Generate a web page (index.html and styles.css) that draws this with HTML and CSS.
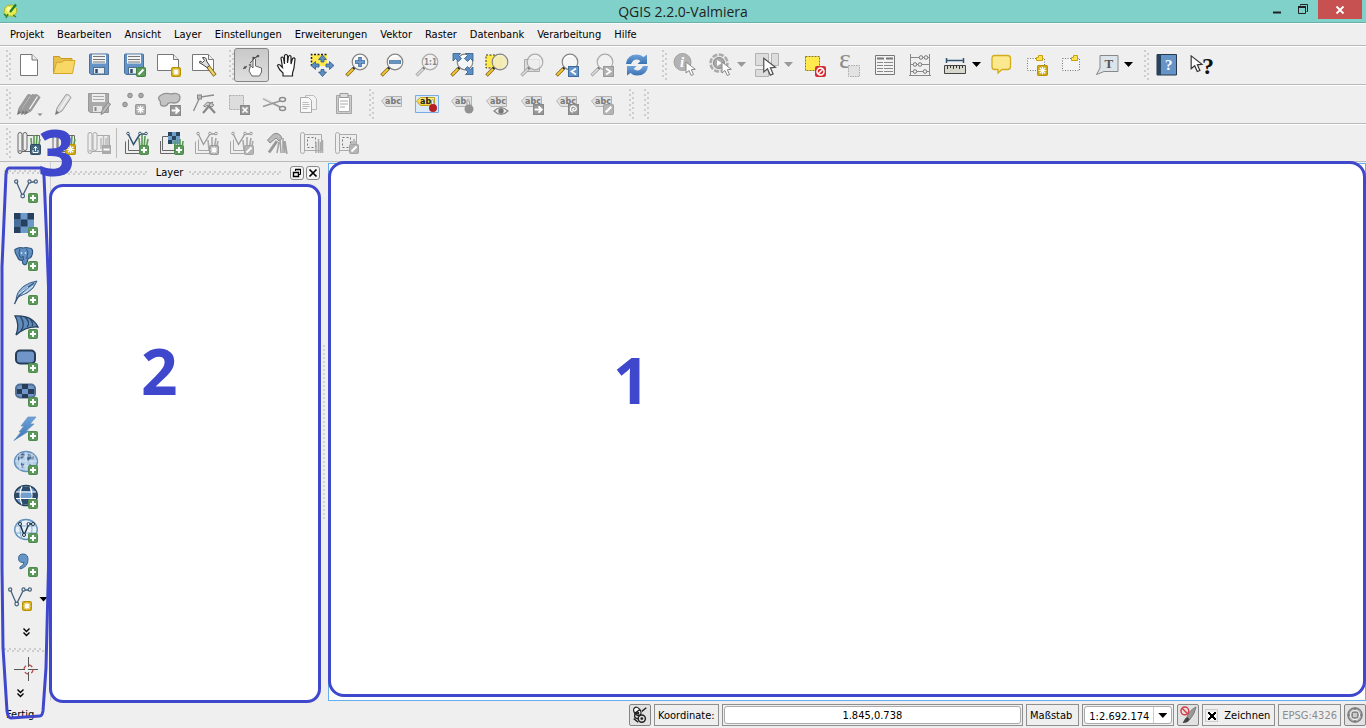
FILE: index.html
```html
<!DOCTYPE html>
<html lang="de">
<head>
<meta charset="utf-8">
<title>QGIS 2.2.0-Valmiera</title>
<link rel="stylesheet" href="styles.css">
</head>
<body>
<svg class="defs" aria-hidden="true">
<defs>
<linearGradient id="yel" x1="0" y1="0" x2="0" y2="1"><stop offset="0" stop-color="#fff27a"/><stop offset="1" stop-color="#f0d040"/></linearGradient>
<linearGradient id="blu" x1="0" y1="0" x2="0" y2="1"><stop offset="0" stop-color="#6fa3dc"/><stop offset="1" stop-color="#3a72b0"/></linearGradient>
<symbol id="b-plus" viewBox="0 0 10 10"><rect x=".5" y=".5" width="9" height="9" rx="1" fill="#5b9a5b" stroke="#4d8a4c"/><path d="M5 2v6M2 5h6" stroke="#fff" stroke-width="2"/></symbol>
<symbol id="b-star" viewBox="0 0 10 10"><rect x=".5" y=".5" width="9" height="9" rx="1" fill="#d0ab14" stroke="#b89300"/><path d="M5 1.500v7M1.500 5h7M2.500 2.500l5 5M7.500 2.500l-5 5" stroke="#fff" stroke-width="1.100"/></symbol>
<symbol id="b-gstar" viewBox="0 0 10 10"><rect x=".5" y=".5" width="9" height="9" rx="1" fill="#adadad" stroke="#9a9a9a"/><path d="M5 1.500v7M1.500 5h7M2.500 2.500l5 5M7.500 2.500l-5 5" stroke="#fff" stroke-width="1.100"/></symbol>
<symbol id="b-pen" viewBox="0 0 10 10"><rect x=".5" y=".5" width="9" height="9" rx="1" fill="#5b9a5b" stroke="#40823f"/><path d="M2.500 7.500L7.500 2.500" stroke="#fff" stroke-width="2"/></symbol>
<symbol id="b-gpen" viewBox="0 0 10 10"><rect x=".5" y=".5" width="9" height="9" rx="1" fill="#b5b5b5" stroke="#a5a5a5"/><path d="M2.500 7.500L7.500 2.500" stroke="#fff" stroke-width="2"/></symbol>
<symbol id="b-garrow" viewBox="0 0 10 10"><rect x=".5" y=".5" width="9" height="9" fill="#999" stroke="#888"/><path d="M1.500 5h6M5 2.200L8 5 5 7.800" fill="none" stroke="#fff" stroke-width="1.700"/></symbol>
<symbol id="cursor" viewBox="0 0 12 16"><path d="M1 1v11l3-2.500 2.200 5 2.300-1-2.200-4.800 4-.4z" fill="#fff" stroke="currentColor"/></symbol>
<symbol id="lens" viewBox="0 0 24 24"><path d="M10 14L8 16" stroke="#222" stroke-width="3"/><path d="M8 16L1.500 22.500" stroke="#7a6415" stroke-width="3.400"/><path d="M8 16L2 22" stroke="#f5c534" stroke-width="2"/><circle cx="15" cy="9" r="7.800" fill="#f7f7f7" fill-opacity=".75" stroke="#858585" stroke-width="1.200"/><path d="M9 7.500a6.500 6.500 0 0 1 9-4" fill="none" stroke="#fff" stroke-width="1.500"/></symbol>
<symbol id="glens" viewBox="0 0 24 24"><path d="M10 14L8 16" stroke="#777" stroke-width="3"/><path d="M8 16L1.500 22.500" stroke="#aaa" stroke-width="3.200"/><path d="M8 16L2 22" stroke="#ddd" stroke-width="1.500"/><circle cx="15" cy="9" r="7.800" fill="#f2f2f2" fill-opacity=".75" stroke="#aaa" stroke-width="1.200"/></symbol>
<symbol id="tag" viewBox="0 0 24 24"><path d="M1.500 9L6 4.500H21.500V14.500H6z" fill="#e2e2e2" stroke="#b3b3b3"/><text x="5" y="12" class="tagtext">abc</text></symbol>
<symbol id="vec" viewBox="0 0 24 24"><path d="M2.500 3L8.500 17 15.500 3H22" fill="none" stroke="#46617a" stroke-width="1.300"/><g fill="#eef3f7" stroke="#46617a" stroke-width="1.200"><circle cx="2.200" cy="2.500" r="1.600"/><circle cx="15.500" cy="2.500" r="1.600"/><circle cx="21.800" cy="2.500" r="1.600"/><circle cx="8.700" cy="17" r="1.800"/></g></symbol>
<symbol id="gmap" viewBox="0 0 24 24"><path d="M.5 10.500V22.500H16M3.500 8.500V19.500H21" fill="none" stroke="#a6a6a6"/><path d="M3 2.500l5.500 11L15 3h6" fill="none" stroke="#999" stroke-width="1.300"/><g fill="#eee" stroke="#999"><circle cx="3" cy="2.500" r="1.300"/><circle cx="15" cy="2.500" r="1.300"/><circle cx="21" cy="2.500" r="1.300"/></g><path d="M14 19L13 9M17 19V6M19 19l2-12M21 19l2-9" stroke="#a9a9a9" stroke-width="1.600"/></symbol>
<symbol id="grass" viewBox="0 0 24 24"><path d="M15 18L14 7M17 18V4M19 18l1-13M21 18l2-10" stroke="#5b9a55" stroke-width="1.600"/></symbol>
<symbol id="loc" viewBox="0 0 24 24"><path d="M10 4.500H22.500V20.500H4" fill="#eee" stroke="currentColor"/><path d="M1 3.500q0-2 2-2t2 2v17q0 2-2 2t-2-2zM6 3.500q0-2 2-2t2 2v14q0 2-2 2t-2-2z" fill="#eee" stroke="currentColor"/><path d="M1.500 20.500q1.500-2 3 0" stroke="currentColor" fill="none"/></symbol>
<symbol id="pencil" viewBox="0 0 24 24"><path d="M3.500 22.500L5 16 14 2.500q3-.500 5 3L10 19z" fill="currentColor" stroke="#999"/><path d="M8.500 17l8-12.500" stroke="#f5f5f5" stroke-width="1.300"/><path d="M3.500 22.500l1-4 2.500 2z" fill="#777"/></symbol>
</defs>
</svg>

<header class="titlebar">
<svg class="applogo" viewBox="0 0 16 16"><path d="M5 2.500q-3.500 3-3 7l3 3 6 1 3.500-4V5L11 2z" fill="#e4ec52" stroke="#a6b83a"/><circle cx="7" cy="6.500" r="2.500" fill="#fff9ad"/><path d="M8 9l6-7.500" stroke="#207c24" stroke-width="2.200"/><path d="M2 11l2 2M6 11l-2 4M11 12l3 2" stroke="#2d8530" stroke-width="1.500"/></svg>
<h1 class="title">QGIS 2.2.0-Valmiera</h1>
<div class="winbuttons">
<button class="win" aria-label="Minimieren"><svg width="12" height="12" viewBox="0 0 12 12"><path d="M2 9.500h8" stroke="#222" stroke-width="2"/></svg></button>
<button class="win" aria-label="Wiederherstellen"><svg width="12" height="12" viewBox="0 0 12 12"><path d="M3.500 2.500v-1h7v7h-1" fill="none" stroke="#222"/><path d="M1.500 3.500h7v7h-7z" fill="none" stroke="#222"/><path d="M1 4h8" stroke="#222" stroke-width="2"/></svg></button>
<button class="win close" aria-label="Schließen"><svg width="10" height="10" viewBox="0 0 10 10"><path d="M1.500 1.500l7 7M8.500 1.500l-7 7" stroke="#fff" stroke-width="1.800"/></svg></button>
</div>
</header>

<nav class="menubar">
<button>Projekt</button><button>Bearbeiten</button><button>Ansicht</button><button>Layer</button><button>Einstellungen</button><button>Erweiterungen</button><button>Vektor</button><button>Raster</button><button>Datenbank</button><button>Verarbeitung</button><button>Hilfe</button>
</nav>

<div class="toolbar">
<div class="group"><i class="grip"></i>
<button class="tool" aria-label="Neu"><svg viewBox="0 0 24 24"><path d="M3.500 1.500H15L20.500 7V22.500H3.500z" fill="#fff" stroke="#777"/><path d="M15 1.500V7h5.500" fill="#eee" stroke="#777"/></svg></button>
<button class="tool" aria-label="Öffnen"><svg viewBox="0 0 24 24"><path d="M1.500 20.500V3.500h6l1.500 2h11v4" fill="#e6c04a" stroke="#c99a20"/><path d="M1.500 20.500L4.500 9.500l6-.500 1-1.500h11.500L20.500 20.500z" fill="#f9d765" stroke="#d4a72b"/></svg></button>
<button class="tool" aria-label="Speichern"><svg viewBox="0 0 24 24"><path d="M2.500 2q0-1 1-1H20.500q1 0 1 1V21.500H4L2.500 20z" fill="#6493c8" stroke="#4b709a"/><rect x="5" y="1.500" width="14" height="9" fill="#f3f3f3"/><path d="M6 3.500h12M6 6.500h12M6 9h12" stroke="#777"/><rect x="6.500" y="14.500" width="11" height="6.500" fill="#e8edf2" stroke="#53718f"/><path d="M9.500 16v4" stroke="#2f4b69" stroke-width="2.500"/></svg></button>
<button class="tool" aria-label="Speichern als"><svg viewBox="0 0 24 24"><path d="M2.500 2q0-1 1-1H20.500q1 0 1 1V21.500H4L2.500 20z" fill="#6493c8" stroke="#4b709a"/><rect x="5" y="1.500" width="14" height="9" fill="#f3f3f3"/><path d="M6 3.500h12M6 6.500h12M6 9h12" stroke="#777"/><rect x="6.500" y="14.500" width="8" height="6.500" fill="#e8edf2" stroke="#53718f"/><path d="M9.500 16v4" stroke="#2f4b69" stroke-width="2.500"/><use href="#b-pen" x="14" y="14" width="10" height="10"/></svg></button>
<button class="tool" aria-label="Neue Druckzusammenstellung"><svg viewBox="0 0 24 24"><path d="M.500 1.500H16.500L21.500 6.500V17.500H.500z" fill="#fff" stroke="#777"/><path d="M16.500 1.500V6.500h5" fill="#eee" stroke="#777"/><use href="#b-star" x="14" y="14" width="10" height="10"/></svg></button>
<button class="tool" aria-label="Druckzusammenstellungen verwalten"><svg viewBox="0 0 24 24"><path d="M.500 1.500H16.500L21.500 6.500V17.500H.500z" fill="#fff" stroke="#777"/><path d="M16.500 1.500V6.500h5" fill="#eee" stroke="#777"/><path d="M16 13.500l7 9" stroke="#7d6720" stroke-width="4"/><path d="M16.500 14l6 8" stroke="#f0d565" stroke-width="2.200"/><path d="M9 10.500l6 4 2.500-2-3-4.500q.500-4-4-3.500l2 3-2 2-2.500-1.500q-1.500 2.500 1 2.500z" fill="#ddd" stroke="#444"/></svg></button>
</div>
<div class="group g2"><i class="grip"></i>
<button class="tool pressed" aria-label="Touch"><svg viewBox="0 0 24 24"><path d="M12 23l-3-5 1-4q2-1.500 3 1V6q1.500-2 2.500 0v7l6 2v4l-2 4z" fill="#fff" stroke="#666"/><path d="M3 16L7 13M10 10L17 3M13 5l4-1" stroke="#555"/><circle cx="10" cy="12" r="1.300" fill="#777"/><circle cx="13.500" cy="5" r="1.300" fill="#555"/><circle cx="18" cy="3" r="1.300" fill="#555"/><circle cx="5" cy="14.500" r="1.300" fill="#555"/></svg></button>
<button class="tool" aria-label="Karte verschieben"><svg viewBox="0 0 24 24"><path d="M8 23v-3Q4 17 2.500 12.500q1-2 3 0L7.500 14.500 6 5q1-2 2.500 0l1 6V2.500q1.500-2 3 0V10l1-6.500q1.500-2 2.500 0V11l1.500-5.500q2-1.500 2.500.5L19 15l-1.500 5v3z" fill="#fff" stroke="#222" stroke-width="1.200"/></svg></button>
<button class="tool" aria-label="Zur Auswahl verschieben"><svg viewBox="0 0 24 24"><path d="M1.500 1.500H17V13H1.500z" fill="#ffe94d"/><path d="M1.500 13V1.500H17.500" fill="none" stroke="#222" stroke-dasharray="2 1.500" stroke-width="1.500"/><g fill="#5b8fc4" stroke="#315b87" stroke-width=".8"><path d="M12.500 2l4 4.500h-2.500V9h-3V6.500H8.500zM12.500 23.500l4-4.500h-2.500v-2.500h-3V19H8.500zM1 12.500l4.500-4v2.500H9v3H5.500v2.500zM24 12.500l-4.500-4v2.500H16v3h3.500v2.500z"/></g></svg></button>
<button class="tool" aria-label="Hineinzoomen"><svg viewBox="0 0 24 24"><use href="#lens"/><path d="M15 4v10M10 9h10" stroke="#34608f" stroke-width="3.400"/><path d="M15 4.500v9M10.500 9h9" stroke="#6a9bd0" stroke-width="1.800"/></svg></button>
<button class="tool" aria-label="Hinauszoomen"><svg viewBox="0 0 24 24"><use href="#lens"/><path d="M9 9h12" stroke="#34608f" stroke-width="3.400"/><path d="M9.500 9h11" stroke="#6a9bd0" stroke-width="1.800"/></svg></button>
<button class="tool" aria-label="Auf native Auflösung zoomen"><svg viewBox="0 0 24 24"><use href="#glens"/><text x="9" y="12" class="oneone">1:1</text></svg></button>
<button class="tool" aria-label="Volle Ausdehnung"><svg viewBox="0 0 24 24"><use href="#lens"/><g fill="#5c8fc5" stroke="#315b87" stroke-width=".8"><path d="M3 .500h7.500L8.500 2.500l3 3-3 3-3-3L3 8zM23 .500V8l-2.500-2.500-3 3-3-3 3-3-2-2zM23 21.500h-7.500l2.500-2.500-3-3 2.500-2.500 3 3 2.500-2.500z"/></g></svg></button>
<button class="tool" aria-label="Zur Auswahl zoomen"><svg viewBox="0 0 24 24"><path d="M1 2h15v13H1z" fill="#ffe94d" stroke="#333" stroke-dasharray="2 1.500"/><use href="#lens"/><circle cx="15" cy="9" r="7" fill="#f1e9a8" opacity=".75"/></svg></button>
<button class="tool" aria-label="Auf Layer zoomen"><svg viewBox="0 0 24 24"><path d="M4.500 6.500h15v12h-15z" fill="#ddd" stroke="#aaa"/><use href="#glens"/></svg></button>
<button class="tool" aria-label="Zoom zurück"><svg viewBox="0 0 24 24"><use href="#lens"/><rect x="13.500" y="13.500" width="10" height="10" fill="#6493c8" stroke="#3e6b9d"/><path d="M21 15.500l-4.500 3 4.500 3" fill="none" stroke="#fff" stroke-width="1.700"/></svg></button>
<button class="tool" aria-label="Zoom vor"><svg viewBox="0 0 24 24"><use href="#glens"/><rect x="13.500" y="13.500" width="10" height="10" fill="#b0b0b0" stroke="#999"/><path d="M16 15.500l4.500 3-4.500 3" fill="none" stroke="#fff" stroke-width="1.700"/></svg></button>
<button class="tool" aria-label="Aktualisieren"><svg viewBox="0 0 24 24"><path d="M1 11Q2 1.500 12 1.500q4 0 6.500 2.500L22 1.500V11h-9.500l3-3q-6-4-9.500 3z" fill="url(#blu)"/><path d="M23 13q-1 9.500-11 9.500-4 0-6.500-2.500L2 22.500V13h9.500l-3 3q6 4 9.500-3z" fill="url(#blu)"/></svg></button>
</div>
<div class="group g3"><i class="grip"></i>
<button class="tool" aria-label="Objekte abfragen"><svg viewBox="0 0 24 24"><circle cx="9.500" cy="9" r="8.500" fill="#b2b2b2" stroke="#a2a2a2"/><text x="7" y="14" class="info">i</text><use href="#cursor" x="12" y="8" width="12" height="16" color="#888"/></svg></button>
<button class="tool" aria-label="Objektaktion ausführen"><svg viewBox="0 0 24 24"><circle cx="11" cy="10" r="8.500" fill="#e6e6e6" stroke="#aaa" stroke-width="2.500" stroke-dasharray="5 1.600"/><circle cx="11" cy="10" r="5.500" fill="#aaa" stroke="#888"/><path d="M9 7l5 3-5 3z" fill="#fff"/><use href="#cursor" x="13" y="8" width="12" height="16" color="#888"/></svg></button>
<button class="drop" aria-label="Aktionen"><i class="tri grey"></i></button>
<button class="tool" aria-label="Objekte wählen"><svg viewBox="0 0 24 24"><path d="M.500 .500h13v12H.500zM16.500 .500h7v12h-7zM.500 16.500h13v7H.500z" fill="#ddd" stroke="#b2b2b2"/><use href="#cursor" x="6" y="4" width="18" height="20" color="#555"/></svg></button>
<button class="drop wide" aria-label="Auswahlart"><i class="tri grey"></i></button>
<button class="tool" aria-label="Auswahl aufheben"><svg viewBox="0 0 24 24"><path d="M2.500 3.500h14v14h-14z" fill="#ffe94d" stroke="#8a7a19" stroke-dasharray="2 1"/><rect x="12" y="13" width="11" height="11" rx="2" fill="#d42b35"/><circle cx="17.500" cy="18.500" r="3.500" fill="none" stroke="#fff" stroke-width="1.500"/><path d="M15 21l5-5" stroke="#fff" stroke-width="1.500"/></svg></button>
<button class="tool" aria-label="Über Ausdruck wählen"><svg viewBox="0 0 24 24"><text x="1" y="15" class="eps">ε</text><path d="M10.500 12.500h11v11h-11z" fill="#e2e2e2" stroke="#aaa" stroke-dasharray="1.500 1"/></svg></button>
<button class="tool" aria-label="Attributtabelle"><svg viewBox="0 0 24 24"><path d="M2.500 2.500h19v19h-19z" fill="#f2f2f2" stroke="#777"/><path d="M4 5.500h7M13 5.500h7" stroke="#777" stroke-width="2"/><path d="M4 9.500h6M11 9.500h9M4 12.500h6M11 12.500h9M4 15.500h6M11 15.500h9M4 18.500h6M11 18.500h9" stroke="#888"/></svg></button>
<button class="tool" aria-label="Feldrechner"><svg viewBox="0 0 24 24"><path d="M2.500 1v22M21.500 1v22M1 22.500h22M2.500 4.500h19M2.500 11.500h19M2.500 18.500h19" fill="none" stroke="#888"/><g fill="#eee" stroke="#777"><circle cx="13" cy="4.500" r="1.800"/><circle cx="18" cy="4.500" r="1.800"/><circle cx="7" cy="11.500" r="1.800"/><circle cx="12" cy="11.500" r="1.800"/><circle cx="7" cy="18.500" r="1.800"/><circle cx="17" cy="18.500" r="1.800"/></g></svg></button>
<button class="tool" aria-label="Linie messen"><svg viewBox="0 0 24 24"><path d="M3.500 5v5M20.500 5v5M3.500 7.500h17" stroke="#31536f" stroke-width="1.500"/><path d="M1.500 12.500h21v8h-21z" fill="#d8d7cc" stroke="#444"/><path d="M4.500 13v3M7.500 13v2M10.500 13v3M13.500 13v2M16.500 13v3M19.500 13v2" stroke="#333"/></svg></button>
<button class="drop" aria-label="Messart"><i class="tri"></i></button>
<button class="tool" aria-label="Kartenhinweise"><svg viewBox="0 0 24 24"><path d="M4.500 2.500h13q3 0 3 3v8q0 3-3 3h-5.500l-4 3.500v-3.500h-3.500q-2.500 0-2.500-3v-8q0-3 2.500-3z" fill="#fae98e" stroke="#d2ac1c" stroke-width="1.300"/></svg></button>
<button class="tool" aria-label="Neues Lesezeichen"><svg viewBox="0 0 24 24"><path d="M2.500 5.500h17v12h-17z" fill="#f4f4f4" stroke="#777" stroke-dasharray="1 1.500"/><path d="M13.500 2.500h4v5h-6v-3h2z" fill="#fde34d" stroke="#c9a00f"/><use href="#b-star" x="12" y="12" width="11" height="11"/></svg></button>
<button class="tool" aria-label="Lesezeichen"><svg viewBox="0 0 24 24"><path d="M2.500 5.500h17v12h-17z" fill="#f4f4f4" stroke="#777" stroke-dasharray="1 1.500"/><path d="M13.500 2.500h4v5h-6v-3h2z" fill="#fde34d" stroke="#c9a00f"/></svg></button>
<button class="tool" aria-label="Textbeschriftung"><svg viewBox="0 0 24 24"><path d="M5 2.500h18v16H9L1.500 21.500 5 15z" fill="#dce5ec" stroke="#888"/><text x="9.500" y="15" class="tee">T</text></svg></button>
<button class="drop" aria-label="Beschriftungsart"><i class="tri"></i></button>
</div>
<div class="group g3"><i class="grip"></i>
<button class="tool" aria-label="Hilfe"><svg viewBox="0 0 24 24"><path d="M2 1.500h19.500v20.500H2z" fill="#6794c8" stroke="#27394b"/><path d="M2 1.500h4v20.500H2z" fill="#27445f"/><text x="10" y="17" class="bookq">?</text></svg></button>
<button class="tool" aria-label="Direkthilfe"><svg viewBox="0 0 24 24"><use href="#cursor" x="0" y="1" width="14" height="20" color="#333"/><text x="12" y="21" class="bigq">?</text></svg></button>
</div>
</div>

<div class="toolbar">
<div class="group"><i class="grip"></i>
<button class="tool" aria-label="Aktuelle Bearbeitungen"><svg viewBox="0 0 24 24" color="#9b9b9b"><use href="#pencil" x="-3"/><use href="#pencil" x="1"/><use href="#pencil" x="4"/><path d="M20.500 21.500h5l-2.500 2.500z" fill="#888"/></svg></button>
<button class="tool" aria-label="Bearbeitungsstatus"><svg viewBox="0 0 24 24" color="#ddd"><use href="#pencil"/></svg></button>
<button class="tool" aria-label="Layeränderungen speichern"><svg viewBox="0 0 24 24"><path d="M1.500 1.500h20v19H3l-1.500-1.500z" fill="#aaa" stroke="#999"/><path d="M5 2h13v8H5z" fill="#eee"/><path d="M6 4.500h11M6 7.500h11" stroke="#aaa"/><path d="M6 14h9v6H6z" fill="#e5e5e5"/><path d="M8.500 15v4" stroke="#888" stroke-width="2"/><path d="M14 22.500l1-4 6-8 2.500 1.500-6 8.500z" fill="#bbb" stroke="#888"/></svg></button>
<button class="tool" aria-label="Objekt hinzufügen"><svg viewBox="0 0 24 24"><g fill="#aaa" stroke="#888"><circle cx="8" cy="3.500" r="2.300"/><circle cx="19" cy="3.500" r="2.300"/><circle cx="3" cy="12.500" r="2.300"/></g><use href="#b-gstar" x="13" y="12" width="11" height="11"/></svg></button>
<button class="tool" aria-label="Objekt verschieben"><svg viewBox="0 0 24 24"><path d="M5 2.500q4-2 9-.5 8-2 9 3 0 6-6 6-4-1-6 .5-1 3-5 2.500-3.500-.5-2.500-4.500Q-1 5.500 5 2.500z" fill="#c4c4c4" stroke="#929292" stroke-width="1.300"/><use href="#b-garrow" x="13" y="13" width="11" height="11"/></svg></button>
<button class="tool" aria-label="Knotenwerkzeug"><svg viewBox="0 0 24 24"><path d="M1.500 19L8 5 22 3" fill="none" stroke="#8b8b8b" stroke-width="1.300"/><rect x="5.500" y="3" width="4" height="4" fill="#bbb" stroke="#888"/><path d="M11 21l7-8M15 12l8 9" stroke="#888" stroke-width="2.200"/><path d="M11.500 14l4-4 3 1-2 3-2-.500-1 1.500zM17 14l1-3 3-1-1 2 2 1-2 2z" fill="#ccc" stroke="#888"/></svg></button>
<button class="tool" aria-label="Ausgewähltes löschen"><svg viewBox="0 0 24 24"><path d="M2.500 3.500h14v14h-14z" fill="#ddd" stroke="#aaa" stroke-dasharray="2 1"/><rect x="13.500" y="13.500" width="9" height="9" fill="#999" stroke="#888"/><path d="M15.500 15.500l5 5M20.500 15.500l-5 5" stroke="#fff" stroke-width="1.700"/></svg></button>
<button class="tool" aria-label="Ausschneiden"><svg viewBox="0 0 24 24"><path d="M1 6.500L18 15M1 14.500L18 9" stroke="#999" stroke-width="1.800"/><path d="M1 6l9 4.500" stroke="#ddd"/><g fill="none" stroke="#8b8b8b" stroke-width="1.500"><ellipse cx="20.500" cy="7.500" rx="3" ry="2"/><ellipse cx="20.500" cy="16.500" rx="3" ry="2"/></g></svg></button>
<button class="tool" aria-label="Kopieren"><svg viewBox="0 0 24 24"><path d="M8.500 3.500h8l3 3V17.500h-11z" fill="#f3f3f3" stroke="#bbb"/><path d="M3.500 5.500h8l3 3V20.500h-11z" fill="#f8f8f8" stroke="#aaa"/><path d="M5.500 10.500h6M5.500 12.500h7M5.500 14.500h7M5.500 16.500h5" stroke="#bbb"/></svg></button>
<button class="tool" aria-label="Einfügen"><svg viewBox="0 0 24 24"><path d="M4.500 3.500h15v18h-15z" fill="#ccc" stroke="#a5a5a5"/><path d="M6.500 5.500h11v14h-11z" fill="#fff" stroke="#aaa"/><path d="M8 1.500h8v4H8z" fill="#ddd" stroke="#999"/><path d="M8 9h8M8 12h8M8 15h5" stroke="#aaa"/></svg></button>
</div>
<div class="group g2"><i class="grip"></i>
<button class="tool" aria-label="Beschriftung"><svg viewBox="0 0 24 24"><use href="#tag"/></svg></button>
<button class="tool" aria-label="Beschriftungen fixiert"><svg viewBox="0 0 24 24"><path d="M.500 3.500h23v17H.500z" fill="#dce9f8" stroke="#79abe5"/><path d="M1.500 9L5.500 5.500H19.500V13.500H5.500z" fill="url(#yel)" stroke="#bea01d"/><text x="5" y="12" class="tagtext dark">ab</text><path d="M16.500 14V8.500q1.500-2 2 0l1 6" fill="#eee" stroke="#999"/><circle cx="18" cy="16" r="4" fill="#b52025"/></svg></button>
<button class="tool" aria-label="Fixieren"><svg viewBox="0 0 24 24"><path d="M1.500 9L6 4.500H21.500V14.500H6z" fill="#e2e2e2" stroke="#b3b3b3"/><text x="5" y="12" class="tagtext">ab</text><path d="M17 14V8.500q1.500-2 2 0l1 6" fill="#eee" stroke="#999"/><circle cx="19" cy="17" r="4.500" fill="#929292"/></svg></button>
<button class="tool" aria-label="Anzeigen"><svg viewBox="0 0 24 24"><use href="#tag"/><path d="M9 19q7-7 14 0-7 7-14 0z" fill="#eee" stroke="#888" stroke-width="1.200"/><circle cx="16" cy="19" r="2.700" fill="#777"/></svg></button>
<button class="tool" aria-label="Verschieben"><svg viewBox="0 0 24 24"><use href="#tag"/><use href="#b-garrow" x="13" y="12" width="11" height="11"/></svg></button>
<button class="tool" aria-label="Drehen"><svg viewBox="0 0 24 24"><use href="#tag"/><rect x="13.500" y="12.500" width="10" height="10" fill="#999" stroke="#888"/><path d="M18 20q-3 0-2.500-3.500.5-3 3.500-2.500 3 1 2 4-2 2-3.500-.5l2-1.500" fill="none" stroke="#fff" stroke-width="1.300"/></svg></button>
<button class="tool" aria-label="Ändern"><svg viewBox="0 0 24 24"><use href="#tag"/><use href="#b-gpen" x="13" y="12" width="11" height="11"/></svg></button>
</div>
<div class="group g4"><i class="grip"></i></div>
<div class="group g4"><i class="grip"></i></div>
</div>

<div class="toolbar last">
<div class="group"><i class="grip"></i>
<button class="tool" aria-label="GRASS Mapset öffnen"><svg viewBox="0 0 24 24" color="#666"><use href="#loc"/><use href="#grass"/><rect x="13.500" y="13.500" width="10" height="10" rx="1" fill="#41647f" stroke="#304d65"/><path d="M16 19v2.500h5V19M18.500 20v-4M16.500 17.500l2-2 2 2" fill="none" stroke="#fff"/></svg></button>
<button class="tool" aria-label="Neues GRASS Mapset"><svg viewBox="0 0 24 24" color="#666"><use href="#loc"/><use href="#grass"/><use href="#b-star" x="13" y="13" width="11" height="11"/></svg></button>
<button class="tool" aria-label="GRASS Mapset schließen"><svg viewBox="0 0 24 24" color="#aaa"><use href="#loc"/><path d="M14 18V7M16.500 18V5M19 18V7M21 18V5" stroke="#bbb" stroke-width="1.500"/><rect x="15" y="14" width="9" height="9" fill="#aaa"/><path d="M16.500 18.500h6" stroke="#fff" stroke-width="2"/></svg></button>
<i class="sep"></i>
<button class="tool" aria-label="GRASS Vektorlayer hinzufügen"><svg viewBox="0 0 24 24"><path d="M.500 10.500V22.500H16M3.500 8.500V19.500H21" fill="none" stroke="#666"/><use href="#grass"/><path d="M3 2.500l5.500 11L15 3h6" fill="none" stroke="#31536f" stroke-width="1.500"/><g fill="#fff" stroke="#31536f"><circle cx="3" cy="2.500" r="1.300"/><circle cx="15" cy="2.500" r="1.300"/><circle cx="21" cy="2.500" r="1.300"/></g><use href="#b-plus" x="14" y="14" width="10" height="10"/></svg></button>
<button class="tool" aria-label="GRASS Rasterlayer hinzufügen"><svg viewBox="0 0 24 24"><path d="M.500 10V22.500H16M2.500 5.500h12v14h-12z" fill="#eee" stroke="#666"/><path d="M8 1h12v12H8z" fill="#6f9fc9"/><path d="M8 1h4v4H8zM16 1h4v4h-4zM12 5h4v4h-4zM8 9h4v4H8z" fill="#29465f"/><path d="M15 18V10M17.500 18V9M20 18V8M22 18l1-8" stroke="#5b9a55" stroke-width="1.600"/><use href="#b-plus" x="14" y="14" width="10" height="10"/></svg></button>
<button class="tool" aria-label="Neuer GRASS Vektorlayer"><svg viewBox="0 0 24 24"><use href="#gmap"/><use href="#b-gstar" x="14" y="14" width="10" height="10"/></svg></button>
<button class="tool" aria-label="GRASS Vektorlayer bearbeiten"><svg viewBox="0 0 24 24"><use href="#gmap"/><use href="#b-gpen" x="14" y="14" width="10" height="10"/></svg></button>
<button class="tool" aria-label="GRASS Werkzeuge"><svg viewBox="0 0 24 24"><path d="M4 21.500L12 10" stroke="#999" stroke-width="3"/><path d="M2.500 9l6-6q4-2 7 1.500l1.500 3-3 2.500-3-3-6 5z" fill="#bbb" stroke="#888"/><path d="M12 22l2-11M16 22L15 8M18 22V7M20 22l-1-12M22 23L20 10" stroke="#a2a2a2" stroke-width="1.500"/></svg></button>
<button class="tool" aria-label="GRASS Region anzeigen"><svg viewBox="0 0 24 24"><path d="M.500 3.500q0-2 2-2t2 2v17q0 2-2 2t-2-2zM4.500 3.500h17v16H4" fill="#eee" stroke="#aaa"/><path d="M7.500 6.500h8v10h-8z" fill="none" stroke="#777" stroke-dasharray="2 2"/><path d="M16 22V11M18.500 22V8M20.500 22V11M22.500 22V9" stroke="#aaa" stroke-width="1.500"/></svg></button>
<button class="tool" aria-label="GRASS Region bearbeiten"><svg viewBox="0 0 24 24"><path d="M.500 3.500q0-2 2-2t2 2v17q0 2-2 2t-2-2zM4.500 3.500h17v16H4" fill="#eee" stroke="#aaa"/><path d="M7.500 6.500h8v10h-8z" fill="none" stroke="#777" stroke-dasharray="2 2"/><path d="M17 18V10M19 18V8M21 18V10" stroke="#aaa" stroke-width="1.500"/><use href="#b-gpen" x="14" y="13" width="10" height="10"/></svg></button>
</div>
</div>

<main class="workspace">
<aside class="sidebar">
<i class="hgrip"></i>
<button class="stool" aria-label="Vektorlayer hinzufügen"><svg viewBox="0 0 24 24"><use href="#vec"/><use href="#b-plus" x="14" y="14" width="10" height="10"/></svg></button>
<button class="stool" aria-label="Rasterlayer hinzufügen"><svg viewBox="0 0 24 24"><path d="M0 0h20v20H0z" fill="#6c98cb"/><path d="M0 0h6.500v6.500H0zM13.500 0H20v6.500h-6.500zM6.500 6.500h7v7h-7zM0 13.500h6.500V20H0z" fill="#263f5c"/><path d="M0 6.500h6.500v7H0z" fill="#476f9c"/><use href="#b-plus" x="14" y="14" width="10" height="10"/></svg></button>
<button class="stool" aria-label="PostGIS-Layer hinzufügen"><svg viewBox="0 0 24 24"><path d="M4 1q3-1 5 0 3-1 6 0 4 0 3.500 4.500Q18 10 16 11l-2 .500-1 4q-1 3-3 2t-1.500-4.500Q5 14 3.500 10 0 4 1 2.500z" fill="#6090c2" stroke="#31557d" stroke-width="1.200"/><path d="M6 1.500q-2 5 0 8.500 2 2 3-1l.500 4M12 1.500q3 3 1.500 7l-1 3" fill="none" stroke="#31557d"/><circle cx="7.500" cy="6" r=".8" fill="#fff"/><circle cx="11.500" cy="6" r=".8" fill="#fff"/><use href="#b-plus" x="14" y="14" width="10" height="10"/></svg></button>
<button class="stool" aria-label="SpatiaLite-Layer hinzufügen"><svg viewBox="0 0 24 24"><path d="M2 20Q2 11 10 5 16 1 23 0q-3 8-10 12-5 2-9 4z" fill="#8fb5e0" stroke="#3b5e83"/><path d="M.500 23Q4 12 20 2" fill="none" stroke="#34506e" stroke-width="1.300"/><path d="M5 13l9-7M9 13l10-8" stroke="#e4eefa"/><use href="#b-plus" x="14" y="14" width="10" height="10"/></svg></button>
<button class="stool" aria-label="MSSQL-Layer hinzufügen"><svg viewBox="0 0 24 24"><path d="M1 1q17-1 23 11Q12 11 2 20 6 9 1 1z" fill="#618dbe" stroke="#29415d" stroke-width="1.300"/><path d="M6 1q6 8 1 15M11 2q6 6 2 10M16 4q4 5 2 7" fill="none" stroke="#294a6a" stroke-width="1.300"/><use href="#b-plus" x="14" y="14" width="10" height="10"/></svg></button>
<button class="stool" aria-label="Oracle-Layer hinzufügen"><svg viewBox="0 0 24 24"><rect x="2" y="1.500" width="19" height="13" rx="4" fill="#7096c9" stroke="#263c57" stroke-width="2"/><use href="#b-plus" x="14" y="14" width="10" height="10"/></svg></button>
<button class="stool" aria-label="Oracle-GeoRaster hinzufügen"><svg viewBox="0 0 24 24"><rect x="2" y="1.500" width="19" height="13" rx="4" fill="#7096c9" stroke="#526f96" stroke-width="2"/><path d="M8 1h6v5H8zM3 6h5v5H3zM14 6h6v5h-6zM8 11h6v4H8z" fill="#263c57"/><use href="#b-plus" x="14" y="14" width="10" height="10"/></svg></button>
<button class="stool" aria-label="SQL-Anywhere-Layer hinzufügen"><svg viewBox="0 0 24 24"><path d="M14 0h8l-6 7h4l-8 7h3L0 23.500l7-8.500H5l5-6H7z" fill="url(#blu)" stroke="#5e8fbd" stroke-width=".7"/><use href="#b-plus" x="14" y="14" width="10" height="10"/></svg></button>
<button class="stool" aria-label="WMS-Layer hinzufügen"><svg viewBox="0 0 24 24"><ellipse cx="12" cy="10.500" rx="11.500" ry="10" fill="#b4cee8" stroke="#6890bb" stroke-width="1.400"/><path d="M4 5l5-3 2 2-2 3-3 1-2 3zM14 3l6 2-1 4-3-1-2 3-1-3zM7 12l3 1-1 4-2-2M15 13l3 1-1 2z" fill="#4a6c92"/><path d="M1 10h22M12 1v19M6 2v17M18 2v17M3 5h18M3 15h18" stroke="#dbe8f4" stroke-width=".8"/><use href="#b-plus" x="14" y="14" width="10" height="10"/></svg></button>
<button class="stool" aria-label="WCS-Layer hinzufügen"><svg viewBox="0 0 24 24"><ellipse cx="12" cy="10.500" rx="11.200" ry="10" fill="#729fce" stroke="#263f59" stroke-width="1.600"/><path d="M7 2h9v4H7zM1 7h5v6H1zM17 7h6v6h-6zM7 14h9v5H7z" fill="#2c4c6c"/><path d="M2 7h20M2 13.500h20M8 1.500q-4 9 0 18M16 1.500q4 9 0 18" fill="none" stroke="#fff" stroke-width="1.200"/><use href="#b-plus" x="14" y="14" width="10" height="10"/></svg></button>
<button class="stool" aria-label="WFS-Layer hinzufügen"><svg viewBox="0 0 24 24"><ellipse cx="12" cy="10.500" rx="11.300" ry="10" fill="#e6f0fa" stroke="#5f8dbb" stroke-width="1.300"/><path d="M1 7h22M1 14h22M8 1q-4 9 0 19M16 1q4 9 0 19" fill="none" stroke="#83abd3"/><path d="M6 5l4 11 5-11h4" fill="none" stroke="#1d2d3d" stroke-width="1.400"/><g fill="#fff" stroke="#1d2d3d"><circle cx="6" cy="5" r="1.500"/><circle cx="14.500" cy="5" r="1.500"/><circle cx="19" cy="5" r="1.500"/><circle cx="10" cy="16" r="1.500"/></g><use href="#b-plus" x="14" y="14" width="10" height="10"/></svg></button>
<button class="stool" aria-label="Textlayer hinzufügen"><svg viewBox="0 0 24 24"><path d="M4.500 5.500q0-4.500 4.500-4.500 5 0 5 5.500Q14 14 6 16v-2q4-2 4-4.500-5.500.5-5.500-4z" fill="#6595c6" stroke="#3d6893"/><use href="#b-plus" x="14" y="14" width="10" height="10"/></svg></button>
<div class="split"><button class="stool narrow" aria-label="Neuer Shapelayer"><svg viewBox="0 0 24 24"><use href="#vec"/><use href="#b-star" x="14" y="14" width="10" height="10"/></svg></button><button class="drop" aria-label="Neuer Layer"><i class="tri"></i></button></div>
<button class="more" aria-label="Mehr Werkzeuge"><svg width="7" height="9" viewBox="0 0 7 9"><path d="M.500 .500l3 3 3-3M.500 4.500l3 3 3-3" fill="none" stroke="#000" stroke-width="1.400"/></svg></button>
<i class="hgrip"></i>
<button class="stool" aria-label="Koordinaten erfassen"><svg viewBox="0 0 24 24"><path d="M0 12.500h11M14 12.500h10M14.500 0v10M14.500 15v9" stroke="#555"/><circle cx="14.500" cy="12.500" r="4.500" fill="none" stroke="#ba4a4a" stroke-width="1.300" stroke-dasharray="4 3"/></svg></button>
<button class="more left" aria-label="Mehr"><svg width="7" height="9" viewBox="0 0 7 9"><path d="M.500 .500l3 3 3-3M.500 4.500l3 3 3-3" fill="none" stroke="#000" stroke-width="1.400"/></svg></button>
<svg class="outline" viewBox="0 0 50 550" preserveAspectRatio="none"><path d="M9 2H40Q43 2 44 10L47 80 48.500 120V400L46 500 43 543Q42 548 40 548L11 550Q8 550 7 543L3 480 2 400V100L6 8Q7 2 9 2z"/></svg>
<span class="digit three">3</span>
</aside>

<section class="layers">
<div class="dockhead"><i class="hgrip grow"></i><h2>Layer</h2><i class="hgrip grow"></i>
<button class="dockbtn" aria-label="Abdocken"><svg width="10" height="10" viewBox="0 0 10 10"><path d="M3.500 3V1.500h5v5H7" fill="none" stroke="#000"/><path d="M1.500 4.500h5v4h-5zM3 1.500h6M1 4.500h6" fill="none" stroke="#000" stroke-width="1.400"/></svg></button>
<button class="dockbtn" aria-label="Layerfenster schließen"><svg width="10" height="10" viewBox="0 0 10 10"><path d="M1.500 1.500l7 7M8.500 1.500l-7 7" stroke="#000" stroke-width="1.700"/></svg></button></div>
<div class="layerlist"><span class="digit two">2</span></div>
</section>
<div class="splitter"><i class="vdots"></i></div>
<section class="map"><div class="frame"></div><span class="digit one">1</span></section>
</main>

<footer class="status">
<span class="ready">Fertig</span>
<button class="sbtn" aria-label="Mausposition"><svg viewBox="0 0 20 20"><ellipse cx="7" cy="6" rx="3.500" ry="5" transform="rotate(-35 7 6)" fill="#fff" stroke="#222" stroke-width="1.500"/><path d="M4 8l6-4M9 9q-5-2-5 2 0 3 5 3M12 6l5-4M3 14l5 4M7 6l2 2" fill="none" stroke="#222" stroke-width="1.500"/><circle cx="12" cy="14" r="4" fill="#ddd" stroke="#222" stroke-width="1.600"/><circle cx="12" cy="14" r="1.500" fill="#222"/></svg></button>
<label class="slabel" for="coord">Koordinate:</label>
<div class="well grow"><input id="coord" type="text" value="1.845,0.738"></div>
<label class="slabel scalelabel" for="scale">Maßstab</label>
<div class="well scale"><select id="scale"><option>1:2.692.174</option></select><i class="tri"></i></div>
<button class="sbtn" aria-label="Zeichnen anhalten"><svg viewBox="0 0 20 20"><path d="M19 1q-8 4-10 11l3 3q5-5 7-14z" fill="#999" stroke="#777"/><path d="M9 12q-3 2-5 7 6 0 8-4z" fill="#444"/><circle cx="6.500" cy="5.500" r="4.300" fill="none" stroke="#d43b43" stroke-width="1.600"/><path d="M3.500 2.500l6 6" stroke="#d43b43" stroke-width="1.600"/></svg></button>
<label class="slabel check"><input type="checkbox" checked>Zeichnen</label>
<button class="slabel epsg">EPSG:4326</button>
<button class="sbtn" aria-label="KBS-Status"><svg viewBox="0 0 20 20"><circle cx="10" cy="10" r="8" fill="#aaa" stroke="#777" stroke-width="1.300"/><path d="M2 10h16M10 2v16" fill="none" stroke="#666" stroke-width="1.300"/><circle cx="10" cy="10" r="5" fill="none" stroke="#eee" stroke-width="1.500"/><rect x="7" y="7" width="6" height="6" fill="#ccc" stroke="#777"/></svg></button>
</footer>
</body>
</html>
```
FILE: styles.css
```css
* { box-sizing: border-box; }
body {
  margin: 0;
  height: 100vh;
  display: flex;
  flex-direction: column;
  overflow: hidden;
  background: #efefef;
  color: #000;
  font: 11px/16px "DejaVu Sans Condensed", "DejaVu Sans", sans-serif;
}
button, input, select { font: inherit; color: inherit; }
button { border: 0; padding: 0; background: none; }
.defs { position: absolute; width: 0; height: 0; }
svg { flex: none; overflow: visible; }

.titlebar {
  flex: none;
  height: 23px;
  display: grid;
  grid-template-columns: 1fr auto 1fr;
  background: #80d1c9;
  border-bottom: 1px solid #6bb0a9;
}
.applogo { width: 16px; height: 16px; margin: 3px 0 0 2px; }
.title { margin: 0; font: 14px/23px "Open Sans", sans-serif; color: #222; }
.winbuttons { display: flex; justify-content: flex-end; padding-right: 4px; }
.win { width: 26px; height: 18px; display: flex; align-items: center; justify-content: center; }
.close { width: 44px; height: 19px; margin-left: 2px; background: #c75050; }

.menubar {
  flex: none;
  height: 23px;
  display: flex;
  align-items: center;
  gap: 13px;
  padding: 1px 0 0 10px;
  border-top: 1px solid #fafafa;
  border-bottom: 1px solid #b9b9b9;
}

.toolbar {
  flex: none;
  height: 39px;
  display: flex;
  align-items: center;
  padding: 0 0 2px 6px;
  border-top: 1px solid #fff;
  border-bottom: 1px solid #bababa;
}
.last { height: 38px; padding-bottom: 0; }
.group { display: flex; align-items: center; }
.g2 { margin-left: 8px; }
.g3 { margin-left: 8px; }
.g4 { margin-left: 10px; }
.grip {
  width: 5px;
  height: 30px;
  background:
    radial-gradient(circle at 1px 1px, #cdcdcd 1px, transparent 1px),
    radial-gradient(circle at 4px 4px, #cdcdcd 1px, transparent 1px);
  background-size: 5px 5px;
}
.tool { width: 35px; height: 34px; display: flex; align-items: center; justify-content: center; }
.tool svg, .stool svg { width: 24px; height: 24px; }
.pressed { border: 1px solid #858585; border-radius: 3px; background: linear-gradient(#c9c9c9, #dedede); }
.drop { width: 12px; height: 34px; display: flex; align-items: center; }
.wide { width: 13px; }
.tri { width: 9px; height: 5px; background: #000; clip-path: polygon(0 0, 100% 0, 50% 100%); }
.grey { background: #999; }
.sep { width: 1px; height: 30px; margin: 0 2px 0 0; background: #bbb; }

.tagtext { font: bold 8px "DejaVu Sans", sans-serif; fill: #777; }
.dark { fill: #222; }
.oneone { font: bold 8px "DejaVu Sans Condensed", sans-serif; fill: #888; }
.info { font: italic bold 15px "Liberation Serif", serif; fill: #fff; }
.eps { font: 28px "Liberation Serif", serif; fill: #8c8c8c; }
.tee { font: bold 13px "Liberation Serif", serif; fill: #555; }
.bookq { font: bold 15px "Liberation Serif", serif; fill: #fff; }
.bigq { font: bold 24px "Liberation Serif", serif; fill: #111; }

.workspace { flex: 1; min-height: 0; display: flex; }
.sidebar {
  position: relative;
  width: 51px;
  display: flex;
  flex-direction: column;
  padding-top: 8px;
  border-right: 1px solid #d0d0d0;
}
.hgrip {
  flex: none;
  height: 4px;
  margin: 0 6px 0 4px;
  background:
    radial-gradient(circle at 1px 1px, #cdcdcd 1px, transparent 1px),
    radial-gradient(circle at 4px 3px, #cdcdcd 1px, transparent 1px);
  background-size: 5px 4px;
}
.stool { flex: none; width: 52px; height: 34px; display: flex; align-items: center; justify-content: center; }
.split { display: flex; width: 50px; }
.narrow { width: 39px; }
.more { height: 32px; width: 52px; display: flex; align-items: center; justify-content: center; }
.left { width: 40px; height: 15px; }
.outline { position: absolute; left: 0; top: 4px; width: 50px; height: 552px; z-index: 2; pointer-events: none; }
.outline path { fill: none; stroke: #3f48cc; stroke-width: 3px; }
.digit { position: absolute; font: bold 64px/64px "Open Sans", sans-serif; color: #3f48cc; z-index: 3; }
.three { left: 38px; top: -42px; }

.layers { width: 270px; display: flex; flex-direction: column; }
.dockhead { flex: none; height: 21px; display: flex; align-items: center; padding-right: 1px; gap: 1px; }
.dockhead h2 { margin: 0; padding: 0 1px; font: inherit; }
.grow { flex: 1; }
.dockbtn {
  width: 14px;
  height: 14px;
  margin-left: 1px;
  display: flex;
  align-items: center;
  justify-content: center;
  border: 1px solid #888;
  border-radius: 3px;
  background: #f5f5f5;
}
.layerlist {
  position: relative;
  flex: 1;
  margin: 1px 0 -2px -2px;
  background: #fff;
  border: 3px solid #3f48cc;
  border-radius: 14px;
}
.two { left: calc(50% - 44px); top: 152px; }
.splitter { width: 7px; display: flex; align-items: center; justify-content: center; }
.vdots { width: 3px; height: 174px; background: radial-gradient(circle at 1px 1px, #d2d2d2 1px, transparent 1px); background-size: 3px 4px; }
.map { position: relative; flex: 1; margin-top: 1px; background: #fff; border: 1px solid #67aef0; }
.frame { position: absolute; inset: -3px -1px 3px -1px; border: 3px solid #3f48cc; border-radius: 16px; }
.one { left: calc(28% - 6px); top: 184px; }

.status { flex: none; height: 27px; display: flex; align-items: center; gap: 3px; padding: 1px 0 0 6px; }
.ready { width: 620px; }
.sbtn {
  width: 22px;
  height: 22px;
  display: flex;
  align-items: center;
  justify-content: center;
  border: 1px solid #858585;
  border-radius: 2px;
  background: #e2e2e2;
}
.sbtn svg { width: 18px; height: 18px; }
.slabel { height: 22px; display: flex; align-items: center; padding: 1px 3px 0; border: 1px solid #8f8f8f; white-space: nowrap; }
.scalelabel { padding-right: 6px; }
.well { position: relative; height: 22px; border: 1px solid #8f8f8f; padding: 1px; display: flex; }
.well input { width: 100%; border: 1px solid #aaa; border-radius: 3px; padding: 2px 0 0; text-align: center; background: #fff; }
.scale { width: 92px; }
.scale select { width: 100%; appearance: none; border: 1px solid #aaa; border-radius: 3px; background: linear-gradient(#ccc, #ccc) right 17px top / 1px 100% no-repeat #fff; padding: 2px 4px 0; }
.scale .tri { position: absolute; right: 6px; top: 8px; }
.check { gap: 6px; padding-right: 4px; padding-left: 2px; }
.check input {
  appearance: none;
  width: 13px;
  height: 13px;
  margin: 0;
  border: 1px solid #ccc;
  background:
    linear-gradient(45deg, transparent 38%, #000 38% 62%, transparent 62%) center / 8px 8px no-repeat,
    linear-gradient(-45deg, #fff 38%, #000 38% 62%, #fff 62%) center / 8px 8px no-repeat;
}
.epsg { color: #8b8b8b; }
```
